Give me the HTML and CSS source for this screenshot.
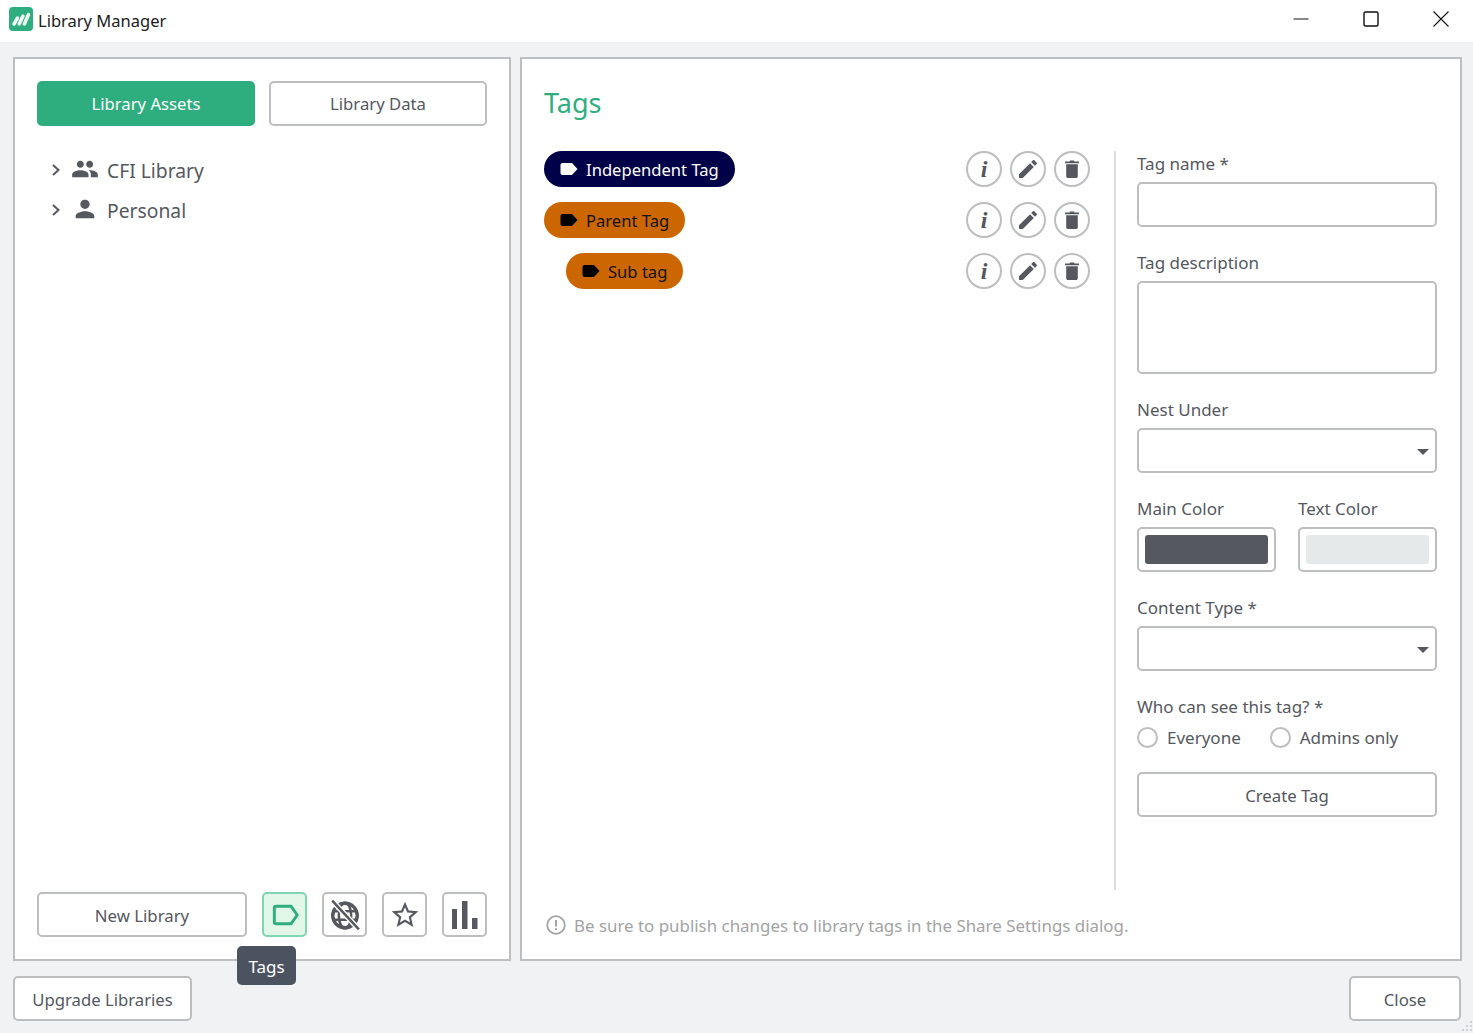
FILE: index.html
```html
<!DOCTYPE html>
<html lang="en">
<head>
<meta charset="utf-8">
<title>Library Manager</title>
<link rel="stylesheet" href="styles.css">
</head>
<body>
<div class="app">
  <header class="titlebar">
    <svg class="logo" viewBox="0 0 24 24"><rect width="24" height="24" rx="4" fill="#2eae7e"/><path d="M5 17 8.500 11M10.200 17 14 9M15.400 17 19.500 7.500" stroke="#eef9f5" stroke-width="3.500" stroke-linecap="round" fill="none"/></svg>
    <span class="app-title">Library Manager</span>
    <div class="winctl">
      <svg class="winicon" viewBox="0 0 16 16"><path d="M0.500 8H15.500" stroke="#111" fill="none"/></svg>
      <svg class="winicon" viewBox="0 0 16 16"><rect x="1" y="1" width="14" height="14" rx="1.500" stroke="#111" stroke-width="1.400" fill="none"/></svg>
      <svg class="winicon" viewBox="0 0 16 16"><path d="M0.500 0.500 15.500 15.500M15.500 0.500 0.500 15.500" stroke="#111" stroke-width="1.100" fill="none"/></svg>
    </div>
  </header>
  <main class="main">
    <section class="panel left">
      <div class="tabs">
        <button class="btn primary grow">Library Assets</button>
        <button class="btn grow">Library Data</button>
      </div>
      <ul class="tree">
        <li class="tree-row">
          <svg class="chev" viewBox="0 0 10 14"><path d="M2 2 7.500 7 2 12" stroke="#55585e" stroke-width="2" fill="none"/></svg>
          <svg class="tree-icon" viewBox="0 0 24 24"><path d="M16 11c1.660 0 2.990-1.340 2.990-3S17.660 5 16 5c-1.660 0-3 1.340-3 3s1.340 3 3 3zm-8 0c1.660 0 2.990-1.340 2.990-3S9.660 5 8 5C6.340 5 5 6.340 5 8s1.340 3 3 3zm0 2c-2.330 0-7 1.170-7 3.500V19h14v-2.500c0-2.330-4.670-3.500-7-3.500zm8 0c-.29 0-.62.02-.97.05 1.160.84 1.970 1.970 1.970 3.450V19h6v-2.500c0-2.330-4.670-3.500-7-3.500z"/></svg>
          <span class="tree-text">CFI Library</span>
        </li>
        <li class="tree-row">
          <svg class="chev" viewBox="0 0 10 14"><path d="M2 2 7.500 7 2 12" stroke="#55585e" stroke-width="2" fill="none"/></svg>
          <svg class="tree-icon" viewBox="0 0 24 24"><path d="M12 12c2.210 0 4-1.790 4-4s-1.790-4-4-4-4 1.790-4 4 1.790 4 4 4zm0 2c-2.670 0-8 1.340-8 4v2h16v-2c0-2.660-5.330-4-8-4z"/></svg>
          <span class="tree-text">Personal</span>
        </li>
      </ul>
      <div class="toolbar">
        <button class="btn new-lib">New Library</button>
        <button class="btn icon-btn active">
          <svg viewBox="0 0 24 24" class="tool-icon"><path d="M4 6.800C4 6 4.600 5.500 5.400 5.500H16.600L21.200 12L16.600 18.500H5.400C4.600 18.500 4 18 4 17.200Z" fill="none" stroke="#2eae7e" stroke-width="2.200" stroke-linejoin="round"/></svg>
        </button>
        <button class="btn icon-btn">
          <svg viewBox="0 0 30 30" class="tool-icon"><g stroke="#55585e" fill="none"><circle cx="15" cy="15.500" r="11.500" stroke-width="3.200"/><ellipse cx="15" cy="15.500" rx="5.800" ry="12" stroke-width="2.400"/><path d="M3 11.500H27M3 19.500H27" stroke-width="2.400"/></g><path d="M2.500 1 28.500 29" stroke="#fff" stroke-width="5"/><path d="M3 1.500 28 28.500" stroke="#55585e" stroke-width="2.300"/></svg>
        </button>
        <button class="btn icon-btn">
          <svg viewBox="0 0 24 24" class="tool-icon"><path d="M22 9.240l-7.190-.62L12 2 9.190 8.630 2 9.240l5.460 4.730L5.820 21 12 17.270 18.180 21l-1.630-7.030L22 9.240zM12 15.400l-3.760 2.270 1-4.280-3.320-2.880 4.380-.38L12 6.100l1.710 4.040 4.380.38-3.320 2.880 1 4.280L12 15.400z" fill="#55585e"/></svg>
        </button>
        <button class="btn icon-btn">
          <svg viewBox="0 0 26 28" class="tool-icon big"><rect x="0" y="8" width="5" height="20" fill="#55585e"/><rect x="10" y="0" width="5.500" height="28" fill="#55585e"/><rect x="20" y="17" width="5.500" height="11" fill="#55585e"/></svg>
        </button>
        <div class="tooltip">Tags</div>
      </div>
    </section>
    <section class="panel right">
      <h1 class="heading">Tags</h1>
      <div class="columns">
        <div class="tag-list">
          <div class="tag-row">
            <span class="pill navy"><svg viewBox="0 0 17 12" class="pill-icon"><path d="M0 2C0 .9.9 0 2 0H11.500L17 6L11.500 12H2C.9 12 0 11.100 0 10Z" fill="#fff"/></svg>Independent Tag</span>
            <div class="actions">
              <span class="round info">i</span>
              <span class="round"><svg viewBox="0 0 24 24" class="act-icon"><path d="M3 17.250V21h3.750L17.810 9.940l-3.750-3.750L3 17.250zM20.710 7.040c.39-.39.39-1.020 0-1.410l-2.340-2.340c-.39-.39-1.020-.39-1.410 0l-1.830 1.830 3.750 3.750 1.830-1.830z"/></svg></span>
              <span class="round"><svg viewBox="0 0 14 18" class="trash"><path d="M0 1.500H4.500L5 .4H9L9.500 1.500H14V3.200H0ZM1.200 4.200H12.800V16.200C12.800 17.300 12 18 11 18H3C2 18 1.200 17.300 1.200 16.200Z"/></svg></span>
            </div>
          </div>
          <div class="tag-row">
            <span class="pill orange"><svg viewBox="0 0 17 12" class="pill-icon"><path d="M0 2C0 .9.9 0 2 0H11.500L17 6L11.500 12H2C.9 12 0 11.100 0 10Z" fill="#000"/></svg>Parent Tag</span>
            <div class="actions">
              <span class="round info">i</span>
              <span class="round"><svg viewBox="0 0 24 24" class="act-icon"><path d="M3 17.250V21h3.750L17.810 9.940l-3.750-3.750L3 17.250zM20.710 7.040c.39-.39.39-1.020 0-1.410l-2.340-2.340c-.39-.39-1.020-.39-1.410 0l-1.830 1.830 3.750 3.750 1.830-1.830z"/></svg></span>
              <span class="round"><svg viewBox="0 0 14 18" class="trash"><path d="M0 1.500H4.500L5 .4H9L9.500 1.500H14V3.200H0ZM1.200 4.200H12.800V16.200C12.800 17.300 12 18 11 18H3C2 18 1.200 17.300 1.200 16.200Z"/></svg></span>
            </div>
          </div>
          <div class="tag-row nested">
            <span class="pill orange"><svg viewBox="0 0 17 12" class="pill-icon"><path d="M0 2C0 .9.9 0 2 0H11.500L17 6L11.500 12H2C.9 12 0 11.100 0 10Z" fill="#000"/></svg>Sub tag</span>
            <div class="actions">
              <span class="round info">i</span>
              <span class="round"><svg viewBox="0 0 24 24" class="act-icon"><path d="M3 17.250V21h3.750L17.810 9.940l-3.750-3.750L3 17.250zM20.710 7.040c.39-.39.39-1.020 0-1.410l-2.340-2.340c-.39-.39-1.020-.39-1.410 0l-1.830 1.830 3.750 3.750 1.830-1.830z"/></svg></span>
              <span class="round"><svg viewBox="0 0 14 18" class="trash"><path d="M0 1.500H4.500L5 .4H9L9.500 1.500H14V3.200H0ZM1.200 4.200H12.800V16.200C12.800 17.300 12 18 11 18H3C2 18 1.200 17.300 1.200 16.200Z"/></svg></span>
            </div>
          </div>
        </div>
        <form class="form">
          <div class="field"><span class="label">Tag name *</span><div class="input"></div></div>
          <div class="field"><span class="label">Tag description</span><div class="input area"></div></div>
          <div class="field"><span class="label">Nest Under</span><div class="input select"></div></div>
          <div class="field color-fields">
            <div class="color-field"><span class="label">Main Color</span><div class="input swatch-box"><div class="swatch dark"></div></div></div>
            <div class="color-field"><span class="label">Text Color</span><div class="input swatch-box"><div class="swatch light"></div></div></div>
          </div>
          <div class="field"><span class="label">Content Type *</span><div class="input select"></div></div>
          <div class="field">
            <span class="label">Who can see this tag? *</span>
            <div class="radios">
              <span class="radio-item"><span class="radio"></span>Everyone</span>
              <span class="radio-item"><span class="radio"></span>Admins only</span>
            </div>
          </div>
          <button type="button" class="btn create">Create Tag</button>
        </form>
      </div>
      <div class="note">
        <svg viewBox="0 0 20 20" class="note-icon"><circle cx="10" cy="10" r="8.800" fill="none" stroke="#a3a3a3" stroke-width="1.800"/><path d="M10 5V11.500M10 13.300V15" stroke="#a3a3a3" stroke-width="2" fill="none"/></svg>
        <span>Be sure to publish changes to library tags in the Share Settings dialog.</span>
      </div>
    </section>
  </main>
  <footer class="footer">
    <button class="btn upgrade">Upgrade Libraries</button>
    <button class="btn close">Close</button>
    <svg class="grip" viewBox="0 0 14 14"><g fill="#c4c7cc"><circle cx="12" cy="3" r="1"/><circle cx="8" cy="7" r="1"/><circle cx="12" cy="7" r="1"/><circle cx="4" cy="11" r="1"/><circle cx="8" cy="11" r="1"/><circle cx="12" cy="11" r="1"/></g></svg>
  </footer>
</div>
</body>
</html>
```
FILE: styles.css
```css
* { box-sizing: border-box; }
html, body { margin: 0; padding: 0; }
body {
  background: #f1f2f4;
  color: #55585e;
  font-family: "Noto Sans", "Open Sans", sans-serif;
  font-size: 17px;
}
.app { width: 1473px; height: 1033px; display: flex; flex-direction: column; overflow: hidden; position: relative; }

.titlebar { height: 42px; background: #fff; display: flex; align-items: center; padding-left: 9px; flex: none; }
.logo { width: 24px; height: 24px; margin-top: -4px; flex: none; }
.app-title { margin-left: 5px; color: #1c1c1c; font-size: 16.500px; margin-top: -2px; }
.winctl { margin-left: auto; display: flex; gap: 54px; padding-right: 24px; margin-top: -4px; }
.winicon { width: 16px; height: 16px; display: block; }

.main { display: flex; gap: 9px; height: 904px; margin: 15px 11px 0 13px; flex: none; }
.panel { background: #fff; border: 2px solid #bdbec0; padding: 22px; display: flex; flex-direction: column; }
.left { width: 498px; flex: none; position: relative; }
.right { flex: 1; min-width: 0; padding-bottom: 16px; }

.btn { height: 45px; border: 2px solid #bdbec0; border-radius: 5px; background: #fff; color: #55585e; font: inherit; font-size: 16.800px; padding: 1px 18px 0; display: flex; align-items: center; justify-content: center; }
.grow { flex: 1; padding-top: 0; font-size: 16.700px; }
.primary { background: #2eae7e; border-color: #2eae7e; color: #fff; }
.tabs { display: flex; gap: 14px; }
.upgrade { width: 179px; padding: 1px 0 0; font-size: 16.700px; }

.tree { list-style: none; margin: 25px 0 0; padding: 0; flex: 1; }
.tree-row { height: 40px; display: flex; align-items: center; font-size: 19.300px; padding-left: 14px; }
.tree-text { margin-top: -2px; }
.chev { width: 10px; height: 14px; flex: none; margin-top: -3px; }
.tree-icon { width: 28px; height: 28px; fill: #55585e; margin: -4px 8px 0 10px; flex: none; }

.toolbar { display: flex; gap: 15px; position: relative; }
.new-lib { width: 210px; }
.icon-btn { width: 45px; padding: 0; }
.active { background: #e3f7e8; border-color: #7fd6b3; }
.tool-icon { width: 32px; height: 32px; display: block; }
.tool-icon.big { width: 28px; height: 28px; }
.tooltip { position: absolute; left: 200px; top: 54px; width: 59px; height: 39px; padding-top: 1px; background: #4b5361; color: #fff; border-radius: 5px; display: flex; align-items: center; justify-content: center; z-index: 2; font-size: 17px; }

.heading { margin: 0; font-size: 27px; font-weight: 400; color: #2eae7e; line-height: 44px; height: 44px; }
.columns { display: flex; flex: 1; margin-top: 26px; min-height: 0; }
.tag-list { width: 572px; border-right: 2px solid #dcdcdc; padding-right: 24px; display: flex; flex-direction: column; gap: 15px; }
.tag-row { display: flex; align-items: center; justify-content: space-between; height: 36px; flex: none; }
.nested { padding-left: 22px; }
.pill { height: 36px; border-radius: 18px; padding: 0 16px; display: flex; align-items: center; gap: 8px; font-size: 16.600px; }
.pill-icon { width: 18px; height: 12px; flex: none; }
.navy { background: #000048; color: #fff; }
.orange { background: #cc6600; color: #111; }
.actions { display: flex; gap: 8px; }
.round { width: 36px; height: 36px; border-radius: 50%; border: 2px solid #bdbec0; display: flex; align-items: center; justify-content: center; }
.info { font-family: "Liberation Serif", serif; font-style: italic; font-weight: 700; font-size: 24px; }
.act-icon { width: 24px; height: 24px; fill: #55585e; }
.trash { width: 14px; height: 18px; fill: #55585e; }

.form { width: 300px; margin-left: 21px; padding-top: 1px; display: flex; flex-direction: column; flex: none; }
.field { margin-bottom: 24px; }
.label { display: block; height: 22px; line-height: 23px; margin-bottom: 8px; }
.input { height: 45px; border: 2px solid #bdbec0; border-radius: 5px; background: #fff; position: relative; }
.area { height: 93px; }
.select::after { content: ""; position: absolute; right: 6px; top: 19px; border: 6px solid transparent; border-top: 6px solid #55585e; border-bottom: 0; }
.color-fields { display: flex; justify-content: space-between; }
.color-field { width: 139px; }
.swatch-box { padding: 6px; }
.swatch { height: 100%; border-radius: 3px; }
.dark { background: #55585e; }
.light { background: #e6e9e9; }
.radios { display: flex; gap: 29px; }
.radio-item { display: flex; align-items: center; gap: 9px; height: 24px; }
.radio { width: 21px; height: 21px; border: 2px solid #bdbec0; border-radius: 50%; flex: none; }
.create { width: 300px; margin-top: -1px; }

.note { display: flex; align-items: center; gap: 8px; color: #a3a3a3; font-size: 16.900px; height: 36px; margin-top: 17px; flex: none; }
.note-icon { width: 20px; height: 20px; margin-left: 2px; flex: none; }

.footer { display: flex; justify-content: space-between; padding: 15px 12px 0 13px; position: relative; flex: 1; }
.close { width: 112px; }
.grip { position: absolute; right: 0; bottom: 0; width: 14px; height: 14px; }
```
